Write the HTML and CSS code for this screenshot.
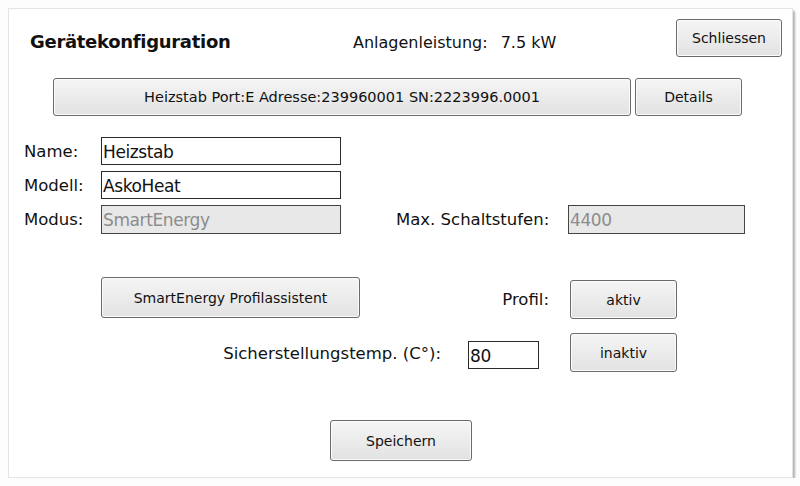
FILE: index.html
```html
<!DOCTYPE html>
<html lang="de">
<head>
<meta charset="utf-8">
<title>Gerätekonfiguration</title>
<link rel="stylesheet" href="styles.css">
</head>
<body>
<div class="dialog">
  <div class="header">
    <h1 class="title">Gerätekonfiguration</h1>
    <div class="power"><span>Anlagenleistung:</span><span class="power-val">7.5 kW</span></div>
    <button class="btn btn-close">Schliessen</button>
  </div>
  <div class="device-row">
    <button class="btn btn-device">Heizstab Port:E Adresse:239960001 SN:2223996.0001</button>
    <button class="btn btn-details">Details</button>
  </div>
  <div class="form">
    <label class="lbl c1">Name:</label>
    <div class="field">Heizstab</div>
    <label class="lbl c1">Modell:</label>
    <div class="field">AskoHeat</div>
    <label class="lbl c1">Modus:</label>
    <div class="field disabled">SmartEnergy</div>
    <label class="lbl lbl-max">Max. Schaltstufen:</label>
    <div class="field disabled field-max">4400</div>
  </div>
  <div class="row-profil">
    <button class="btn btn-assist">SmartEnergy Profilassistent</button>
    <span class="lbl lbl-profil">Profil:</span>
    <button class="btn btn-state btn-aktiv">aktiv</button>
  </div>
  <div class="row-temp">
    <span class="lbl lbl-temp">Sicherstellungstemp. (C°):</span>
    <div class="field field-temp">80</div>
    <button class="btn btn-state">inaktiv</button>
  </div>
  <div class="row-save">
    <button class="btn btn-save">Speichern</button>
  </div>
</div>
</body>
</html>
```

FILE: styles.css
```css
* { box-sizing: border-box; }
html, body { margin: 0; padding: 0; background: #fdfdfd; }
body {
  font-family: "DejaVu Sans", "Liberation Sans", sans-serif;
  color: #111;
  padding: 8px 0 0 8px;
}
.dialog {
  width: 785px;
  height: 470px;
  background: #fff;
  border: 1px solid #e4e4e4;
  box-shadow: 2px 3px 2px rgba(0,0,0,0.3);
  padding-top: 10px;
}
.header {
  display: flex;
  align-items: flex-start;
  height: 38px;
}
.title {
  margin: 12px 0 0 21px;
  width: 323px;
  font-size: 18px;
  font-weight: bold;
  letter-spacing: -0.3px;
}
.power {
  margin-top: 14px;
  font-size: 16px;
}
.power-val { margin-left: 13px; }
.btn {
  font-family: inherit;
  color: #111;
  background: linear-gradient(#f5f5f5, #e2e2e2);
  border: 1px solid #6a6a6a;
  border-radius: 3px;
  padding: 0;
  font-size: 14px;
  box-shadow: inset 0 0 0 1px #fbfbfb;
}
.btn-close {
  margin-left: auto;
  margin-right: 10px;
  width: 106px;
  height: 38px;
}
.device-row {
  display: flex;
  gap: 4px;
  margin: 21px 0 0 44px;
}
.btn-device { width: 578px; height: 38px; font-size: 14.5px; }
.btn-details { width: 107px; height: 38px; }
.form {
  display: grid;
  grid-template-columns: 77px 240px 55px 172px 177px;
  grid-template-rows: 28px 28px 29px;
  row-gap: 6px;
  margin: 21px 0 0 15px;
  align-items: center;
}
.c1 { grid-column: 1; }
.lbl {
  font-size: 16.5px;
}
.field {
  height: 100%;
  border: 1px solid #2a2a2a;
  background: #fff;
  font-size: 17px;
  letter-spacing: -0.4px;
  padding: 2px 0 0 1px;
  line-height: 24px;
}
.field.disabled {
  background: #e8e8e8;
  color: #8c8c8c;
  border-color: #444;
}
.lbl-max { grid-column: 4; }
.row-profil {
  display: flex;
  align-items: flex-start;
  margin-top: 43px;
  height: 42px;
}
.btn-assist {
  margin-left: 92px;
  width: 259px;
  height: 41px;
}
.lbl-profil {
  width: 189px;
  text-align: right;
  margin-top: 13px;
}
.btn-state {
  width: 107px;
  height: 39px;
}
.btn-aktiv { margin: 3px 0 0 21px; }
.row-temp {
  display: flex;
  align-items: flex-start;
  margin-top: 14px;
  height: 39px;
}
.lbl-temp {
  margin-left: 92px;
  width: 340px;
  text-align: right;
  margin-top: 11px;
}
.field-temp {
  margin: 8px 0 0 27px;
  width: 71px;
  height: 28px;
}
.row-temp .btn-state { margin-left: 31px; }
.row-save {
  margin: 48px 0 0 321px;
}
.btn-save {
  width: 142px;
  height: 41px;
}
```
